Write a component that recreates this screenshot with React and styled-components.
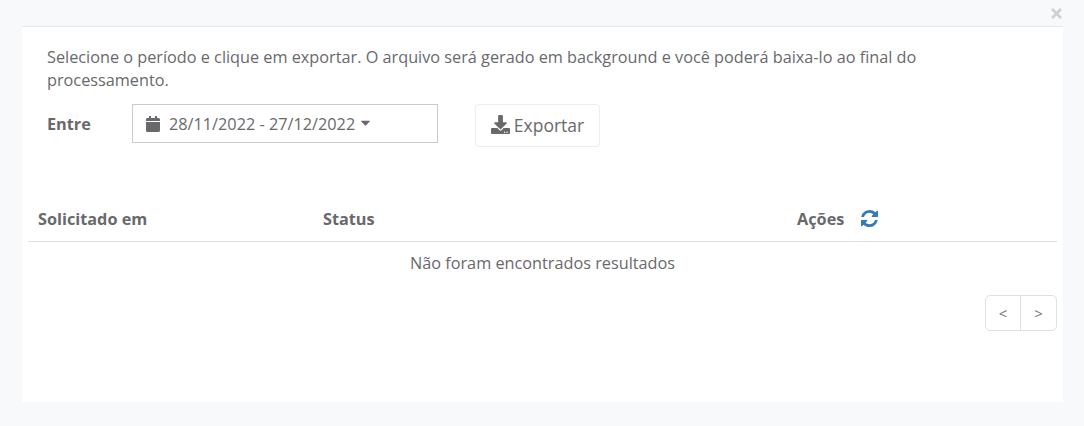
import * as React from "react"
import styled, {createGlobalStyle} from 'styled-components'
import {FaCalendar, FaCaretDown, FaDownload, FaTimes} from 'react-icons/fa'

const Global = createGlobalStyle`
html, body{
  margin: 0;
  padding: 0;
  background-color: #f8f9fb;
}
body{
  font-family: "Open Sans", "Liberation Sans", sans-serif;
  font-size: 16.25px;
  color: #69696c;
}
`

const Page = styled.div`
width: 1084px;
height: 426px;
padding: 0 21px 24px 22px;
box-sizing: border-box;
display: flex;
flex-direction: column;
overflow: hidden;
`

const TopBar = styled.div`
height: 26px;
display: flex;
justify-content: flex-end;
align-items: flex-start;
flex-shrink: 0;
`

const Close = styled.span`
display: flex;
color: #cfd0d2;
font-size: 15px;
margin: 6px -1px 0 0;
`

const Panel = styled.div`
flex: 1;
background-color: #fff;
border-top: 1px solid #e7e8ea;
padding: 19px 6px 0 6px;
`

const Intro = styled.p`
margin: 0 0 0 19px;
width: 900px;
line-height: 23px;
`

const FilterRow = styled.div`
display: flex;
align-items: flex-start;
margin: 12px 0 0 19px;
`

const Label = styled.label`
width: 85px;
margin-top: 10px;
line-height: 20px;
font-weight: 700;
`

const DateBox = styled.div`
width: 306px;
height: 39px;
box-sizing: border-box;
border: 1px solid #c9cacc;
display: flex;
align-items: center;
gap: 8px;
padding: 0 0 0 12px;
`

const Caret = styled(FaCaretDown)`
margin: -2px 0 0 -5px;
`

const ExportButton = styled.button`
width: 125px;
height: 43px;
margin-left: 37px;
box-sizing: border-box;
border: 1px solid #ecedef;
border-radius: 4px;
background-color: #fff;
color: #69696c;
font-family: inherit;
font-size: 17.5px;
display: flex;
align-items: center;
justify-content: center;
gap: 4px;
padding: 0 0 2px;
`

const Grid = styled.div`
margin-top: 49px;
`

const HeadRow = styled.div`
height: 46px;
box-sizing: border-box;
border-bottom: 1px solid #dedfe1;
display: flex;
align-items: center;
padding: 0 0 0 10px;
font-weight: 700;
`

const Col = styled.div`
width: ${props => props.$w}px;
display: flex;
align-items: center;
`

const RefreshIcon = styled.svg`
width: 17px;
height: 17px;
fill: #337ab7;
margin-left: 17px;
`

const Empty = styled.div`
height: 42px;
display: flex;
align-items: center;
justify-content: center;
`

const Pager = styled.div`
display: flex;
justify-content: flex-end;
margin-top: 11px;
`

const PagerGroup = styled.div`
display: flex;
border: 1px solid #dfe0e2;
border-radius: 5px;
height: 36px;
box-sizing: border-box;
`

const PagerButton = styled.div`
width: ${props => props.$w}px;
display: flex;
align-items: center;
justify-content: center;
color: #77787a;
font-size: 15px;
& + &{
  border-left: 1px solid #dfe0e2;
}
`

const Refresh = () => (
  <RefreshIcon viewBox="0 0 1536 1536">
    <path d="M1511 928q0 5-1 7-64 268-268 434.5t-478 166.5q-146 0-282.5-55t-243.5-157l-129 129q-19 19-45 19t-45-19-19-45v-448q0-26 19-45t45-19h448q26 0 45 19t19 45-19 45l-137 137q71 66 161 102t187 36q134 0 250-65t186-179q11-17 53-117 8-23 30-23h192q13 0 22.5 9.5t9.5 22.5zm25-800v448q0 26-19 45t-45 19h-448q-26 0-45-19t-19-45 19-45l138-138q-148-137-349-137-134 0-250 65t-186 179q-11 17-53 117-8 23-30 23h-199q-13 0-22.5-9.5t-9.5-22.5v-7q65-268 270-434.5t480-166.5q146 0 284 55.5t245 156.5l130-129q19-19 45-19t45 19 19 45z" />
  </RefreshIcon>
)

const App = () => {
  return(
    <Page>
      <Global />
      <TopBar>
        <Close><FaTimes /></Close>
      </TopBar>
      <Panel>
        <Intro>Selecione o período e clique em exportar. O arquivo será gerado em background e você poderá baixa-lo ao final do processamento.</Intro>
        <FilterRow>
          <Label>Entre</Label>
          <DateBox>
            <FaCalendar size={16} />
            <span>28/11/2022 - 27/12/2022</span>
            <Caret size={15} />
          </DateBox>
          <ExportButton><FaDownload size={19} /> Exportar</ExportButton>
        </FilterRow>
        <Grid>
          <HeadRow>
            <Col $w={285}>Solicitado em</Col>
            <Col $w={474}>Status</Col>
            <Col>Ações <Refresh /></Col>
          </HeadRow>
          <Empty>Não foram encontrados resultados</Empty>
          <Pager>
            <PagerGroup>
              <PagerButton $w={34}>&lt;</PagerButton>
              <PagerButton $w={35}>&gt;</PagerButton>
            </PagerGroup>
          </Pager>
        </Grid>
      </Panel>
    </Page>
  )
}

export default App
